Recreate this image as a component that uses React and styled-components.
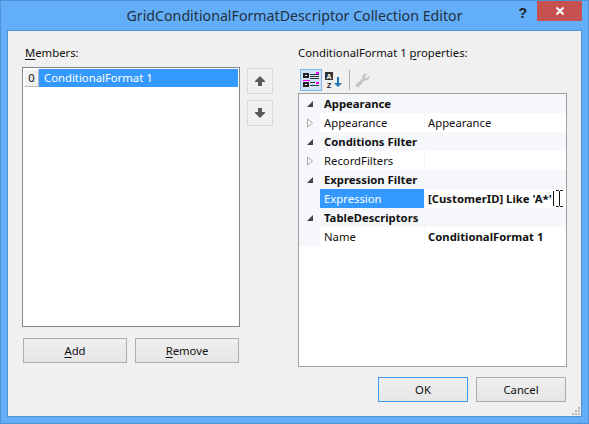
import React from 'react'
import styled, { createGlobalStyle } from 'styled-components'

const GlobalStyle = createGlobalStyle`
  html, body { margin: 0; padding: 0; background: #62aef8; }
  body { font-family: "Noto Sans", "Open Sans", "Liberation Sans", sans-serif; font-size: 11.3px; color: #111; }
`

const Window = styled.div`
  width: 589px;
  height: 424px;
  box-sizing: border-box;
  border: 1px solid #4f93d4;
  background: #62aef8;
  padding: 0 6px 6px;
  display: flex;
  flex-direction: column;
  overflow: hidden;
`

const TitleBar = styled.div`
  height: 29px;
  margin: 0 -6px;
  flex: none;
  display: grid;
  grid-template-columns: 1fr auto 1fr;
`

const Title = styled.div`
  font-size: 14.2px;
  line-height: 29px;
  color: #24303e;
  white-space: nowrap;
`

const WindowControls = styled.div`
  display: flex;
  justify-content: flex-end;
  align-items: flex-start;
  padding-right: 6px;
`

const HelpGlyph = styled.span`
  font-family: "Liberation Sans", sans-serif;
  font-weight: 700;
  font-size: 14px;
  line-height: 24px;
  color: #222;
  margin-right: 10px;
`

const CloseButton = styled.div`
  width: 45px;
  height: 20px;
  background: #c75050;
  display: flex;
  align-items: center;
  justify-content: center;
`

const Client = styled.div`
  flex: 1;
  position: relative;
  border: 1px solid #4f93d4;
  background: #f0f0f0;
  display: flex;
  padding: 0 14px;
  min-height: 0;
`

const LeftColumn = styled.div`
  width: 218px;
  flex: none;
  display: flex;
  flex-direction: column;
`

const FieldLabel = styled.div`
  height: 36px;
  box-sizing: border-box;
  padding: 14px 0 0 ${p => p.$indent}px;
  line-height: 16px;
  white-space: nowrap;
`

const Key = styled.span`
  text-decoration: underline;
  text-underline-offset: 2px;
`

const ListBox = styled.div`
  width: 218px;
  height: 260px;
  box-sizing: border-box;
  border: 1px solid #828790;
  background: #fff;
  padding: 1px;
`

const ListRow = styled.div`
  display: flex;
  height: 18px;
  background: #3399ff;
  color: #fff;
  line-height: 17px;
`

const IndexCell = styled.div`
  width: 15px;
  flex: none;
  box-sizing: border-box;
  background: #f0f0f0;
  color: #111;
  border: 1px solid #bbb;
  border-top-color: #fff;
  border-left-color: #fff;
  text-align: center;
  line-height: 15px;
`

const ListText = styled.span`
  padding-left: 5px;
`

const ButtonRow = styled.div`
  display: flex;
  gap: 8px;
  margin-top: 11px;
  padding-left: 1px;
`

const PushButton = styled.div`
  width: ${p => p.$width}px;
  height: 25px;
  box-sizing: border-box;
  border: 1px solid ${p => (p.$primary ? '#3c9af2' : '#acacac')};
  background: linear-gradient(#f0f0f0, #e5e5e5);
  display: flex;
  align-items: center;
  justify-content: center;
  color: #111;
`

const MoveColumn = styled.div`
  width: 26px;
  flex: none;
  margin: 37px 25px 0 7px;
  display: flex;
  flex-direction: column;
  gap: 6px;
`

const MoveButton = styled.div`
  width: 26px;
  height: 26px;
  box-sizing: border-box;
  border: 1px solid #dadada;
  display: flex;
  align-items: center;
  justify-content: center;
`

const RightColumn = styled.div`
  width: 269px;
  flex: none;
  display: flex;
  flex-direction: column;
`

const Toolbar = styled.div`
  height: 22px;
  margin: 2px 0 2px 2px;
  display: flex;
  align-items: center;
  gap: 1px;
`

const ToolButton = styled.div`
  width: 22px;
  height: 22px;
  box-sizing: border-box;
  border: 1px solid ${p => (p.$active ? '#7eb4ea' : 'transparent')};
  background: ${p => (p.$active ? '#cfe4f8' : 'transparent')};
  display: flex;
  align-items: center;
  justify-content: center;
`

const ToolDivider = styled.div`
  width: 1px;
  height: 20px;
  margin: 0 4px 0 3px;
  background: #a9a9a9;
`

const PropertyGrid = styled.div`
  width: 269px;
  height: 274px;
  box-sizing: border-box;
  border: 1px solid #a0a0a0;
  background: #fff;
`

const CategoryRow = styled.div`
  height: 19px;
  display: flex;
  align-items: center;
  background: #f5f7fa;
  font-weight: 700;
  color: #111;
`

const Gutter = styled.div`
  width: 21px;
  height: 100%;
  flex: none;
  display: flex;
  align-items: center;
  justify-content: center;
`

const CategoryName = styled.span`
  padding-left: 4px;
`

const PropertyRow = styled.div`
  height: 19px;
  display: flex;
  background: #f5f7fa;
`

const NameCell = styled.div`
  width: 104px;
  flex: none;
  box-sizing: border-box;
  padding-left: 4px;
  line-height: 20px;
  background: ${p => (p.$selected ? '#3399ff' : '#fff')};
  color: ${p => (p.$selected ? '#fff' : '#111')};
`

const ValueCell = styled.div`
  flex: 1;
  position: relative;
  margin-left: 1px;
  padding-left: 3px;
  line-height: 20px;
  background: #fff;
  font-weight: ${p => (p.$bold ? 700 : 400)};
  white-space: nowrap;
  color: #111;
`

const Caret = styled.span`
  display: inline-block;
  width: 1px;
  height: 15px;
  margin-left: 1px;
  background: #111;
  vertical-align: -3px;
`

const TextCursor = styled.svg`
  position: absolute;
  left: 130px;
  top: 1px;
`

const DialogButtons = styled.div`
  display: flex;
  justify-content: flex-end;
  gap: 8px;
  margin: 10px 1px 0 0;
`

const ResizeGrip = styled.svg`
  position: absolute;
  right: 1px;
  bottom: 1px;
`

const CategoryArrow = () => (
  <svg width="8" height="8" viewBox="0 0 8 8"><path d="M7 1 V7 H1 Z" fill="#444" /></svg>
)

const ExpandArrow = () => (
  <svg width="8" height="10" viewBox="0 0 8 10"><path d="M1.5 1 L6.5 5 L1.5 9 Z" fill="#fff" stroke="#a6a6a6" /></svg>
)

const CategorizedIcon = () => (
  <svg width="16" height="16" viewBox="0 0 16 16">
    <rect x="0" y="1" width="6" height="5" fill="#222" />
    <rect x="2" y="3" width="2" height="1" fill="#fff" />
    <rect x="0" y="10" width="6" height="5" fill="#222" />
    <rect x="2" y="12" width="2" height="1" fill="#fff" />
    <rect x="0" y="8" width="7" height="1" fill="#f0f" />
    <rect x="13" y="0" width="3" height="2" fill="#f0f" />
    <rect x="7" y="2" width="9" height="1" fill="#333" />
    <rect x="7" y="4" width="9" height="1" fill="#333" />
    <rect x="7" y="6" width="9" height="1" fill="#333" />
    <rect x="7" y="10" width="5" height="1" fill="#333" />
    <rect x="13" y="10" width="3" height="2" fill="#f0f" />
    <rect x="7" y="13" width="9" height="1" fill="#333" />
  </svg>
)

const SortIcon = () => (
  <svg width="18" height="17" viewBox="0 0 18 17">
    <rect x="0" y="0" width="8" height="8" fill="#333" />
    <text x="4" y="6.5" fontSize="7" fontWeight="700" fill="#fff" textAnchor="middle" fontFamily="Liberation Sans">A</text>
    <text x="4" y="15.5" fontSize="7.5" fontWeight="700" fill="#222" textAnchor="middle" fontFamily="Liberation Sans">Z</text>
    <path d="M12 5 H14 V11 H17 L13 15 L9 11 H12 Z" fill="#1f74b5" />
  </svg>
)

const WrenchIcon = () => (
  <svg width="15" height="15" viewBox="0 0 16 16">
    <path d="M15 3 L12 6 L10 4 L13 1 C10 0 7 2 8 6 L1 12 C0 14 2 16 4 15 L10 8 C13 9 16 6 15 3 Z" fill="#c4c4c4" />
  </svg>
)

const UpArrow = () => (
  <svg width="12" height="12" viewBox="0 0 12 12"><path d="M6 1 L11 6 V7 H8 V11 H4 V7 H1 V6 Z" fill="#5a5a5a" /></svg>
)

const DownArrow = () => (
  <svg width="12" height="12" viewBox="0 0 12 12"><path d="M4 1 H8 V5 H11 V6 L6 11 L1 6 V5 H4 Z" fill="#5a5a5a" /></svg>
)

const sections = [
  { name: 'Appearance', rows: [{ name: 'Appearance', value: 'Appearance', expand: true }] },
  { name: 'Conditions Filter', rows: [{ name: 'RecordFilters', value: '', expand: true }] },
  { name: 'Expression Filter', rows: [{ name: 'Expression', value: "[CustomerID] Like 'A*'", bold: true, selected: true }] },
  { name: 'TableDescriptors', rows: [{ name: 'Name', value: 'ConditionalFormat 1', bold: true }] },
]

export default function App() {
  return (
    <Window>
      <GlobalStyle />
      <TitleBar>
        <div />
        <Title>GridConditionalFormatDescriptor Collection Editor</Title>
        <WindowControls>
          <HelpGlyph>?</HelpGlyph>
          <CloseButton>
            <svg width="10" height="10" viewBox="0 0 10 10">
              <path d="M1.5 1.5 L8.5 8.5 M8.5 1.5 L1.5 8.5" stroke="#fff" strokeWidth="2" />
            </svg>
          </CloseButton>
        </WindowControls>
      </TitleBar>

      <Client>
        <LeftColumn>
          <FieldLabel $indent={3}><Key>M</Key>embers:</FieldLabel>
          <ListBox>
            <ListRow>
              <IndexCell>0</IndexCell>
              <ListText>ConditionalFormat 1</ListText>
            </ListRow>
          </ListBox>
          <ButtonRow>
            <PushButton $width={104}><span><Key>A</Key>dd</span></PushButton>
            <PushButton $width={104}><span><Key>R</Key>emove</span></PushButton>
          </ButtonRow>
        </LeftColumn>

        <MoveColumn>
          <MoveButton><UpArrow /></MoveButton>
          <MoveButton><DownArrow /></MoveButton>
        </MoveColumn>

        <RightColumn>
          <FieldLabel $indent={0}>ConditionalFormat 1 <Key>p</Key>roperties:</FieldLabel>
          <Toolbar>
            <ToolButton $active><CategorizedIcon /></ToolButton>
            <ToolButton><SortIcon /></ToolButton>
            <ToolDivider />
            <WrenchIcon />
          </Toolbar>
          <PropertyGrid>
            {sections.map(section => (
              <React.Fragment key={section.name}>
                <CategoryRow>
                  <Gutter><CategoryArrow /></Gutter>
                  <CategoryName>{section.name}</CategoryName>
                </CategoryRow>
                {section.rows.map(row => (
                  <PropertyRow key={row.name}>
                    <Gutter>{row.expand && <ExpandArrow />}</Gutter>
                    <NameCell $selected={row.selected}>{row.name}</NameCell>
                    <ValueCell $bold={row.bold}>
                      {row.value}
                      {row.selected && <Caret />}
                      {row.selected && (
                        <TextCursor width="9" height="17" viewBox="0 0 9 17">
                          <path d="M1 0.5 H3.5 L4.5 1.5 L5.5 0.5 H8 M4.5 1.5 V15.5 M1 16.5 H3.5 L4.5 15.5 L5.5 16.5 H8" stroke="#111" fill="none" />
                        </TextCursor>
                      )}
                    </ValueCell>
                  </PropertyRow>
                ))}
              </React.Fragment>
            ))}
          </PropertyGrid>
          <DialogButtons>
            <PushButton $width={90} $primary>OK</PushButton>
            <PushButton $width={90}>Cancel</PushButton>
          </DialogButtons>
        </RightColumn>

        <ResizeGrip width="9" height="9" viewBox="0 0 9 9">
          <path d="M7 1h2v2H7z M4 4h2v2H4z M7 4h2v2H7z M1 7h2v2H1z M4 7h2v2H4z M7 7h2v2H7z" fill="#b8b8b8" />
        </ResizeGrip>
      </Client>
    </Window>
  )
}
